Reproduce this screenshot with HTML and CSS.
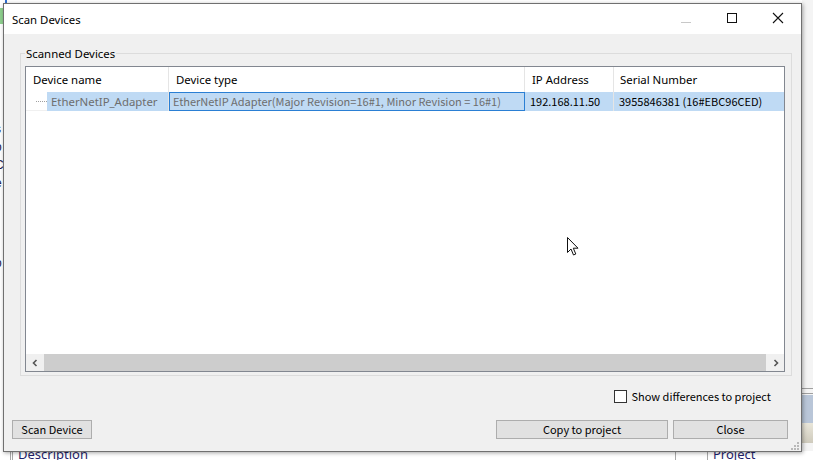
FILE: index.html
```html
<!DOCTYPE html>
<html>
<head>
<meta charset="utf-8">
<link rel="stylesheet" href="styles.css">
</head>
<body>
<div class="desktop">
  <div class="bg-left">
    <span class="bg-l1">s</span><span class="bg-l2">o</span><span class="bg-l3">C</span><span class="bg-l4">e</span><span class="bg-l5">o</span>
  </div>
  <div class="bg-green"></div>
  <div class="bg-blue-tick"></div>
  <div class="bg-right">
    <div class="bg-right-lines"></div>
    <div class="bg-right-blue"></div>
    <div class="bg-right-beige"></div>
  </div>
  <div class="bg-bottom">
    <div class="bg-vline bg-v1"></div>
    <div class="bg-vline bg-v2"></div>
    <span class="bg-desc">Description</span>
    <div class="bg-vline bg-v3"></div>
    <div class="bg-vline bg-v4"></div>
    <span class="bg-proj">Project</span>
  </div>

  <div class="dialog">
    <div class="titlebar">
      <span class="title">Scan Devices</span>
      <div class="controls">
        <svg class="ctl" width="46" height="30" viewBox="0 0 46 30"><line x1="18" y1="18.5" x2="28" y2="18.5" stroke="#c8c8c8" stroke-width="1"/></svg>
        <svg class="ctl" width="46" height="30" viewBox="0 0 46 30"><rect x="18.5" y="9.5" width="9" height="9" fill="none" stroke="#111" stroke-width="1"/></svg>
        <svg class="ctl" width="46" height="30" viewBox="0 0 46 30"><path d="M18 9 L28 19 M28 9 L18 19" stroke="#111" stroke-width="1.1"/></svg>
      </div>
    </div>
    <div class="body">
      <fieldset class="group">
        <legend class="legend">Scanned Devices</legend>
        <div class="list">
          <div class="list-head">
            <div class="hcell c1">Device name</div>
            <div class="hcell c2">Device type</div>
            <div class="hcell c3">IP Address</div>
            <div class="hcell c4">Serial Number</div>
          </div>
          <div class="list-row">
            <div class="cell c1 namecell"><span class="tree-dots"></span><span class="name-sel">EtherNetIP_Adapter</span></div>
            <div class="cell c2 typecell">EtherNetIP Adapter(Major Revision=16#1, Minor Revision = 16#1)</div>
            <div class="cell c3 sel gothic">192.168.11.50</div>
            <div class="cell c4 sel gothic">3955846381 (16#EBC96CED)</div>
          </div>
          <div class="list-empty"></div>
          <div class="hscroll">
            <div class="sb-btn"><svg width="8" height="8" viewBox="0 0 8 8"><path d="M5.5 1 L2.5 4 L5.5 7" fill="none" stroke="#555" stroke-width="1.6"/></svg></div>
            <div class="sb-thumb"></div>
            <div class="sb-btn"><svg width="8" height="8" viewBox="0 0 8 8"><path d="M2.5 1 L5.5 4 L2.5 7" fill="none" stroke="#555" stroke-width="1.6"/></svg></div>
          </div>
        </div>
      </fieldset>
      <div class="check-row">
        <span class="checkbox"></span>
        <span class="check-label">Show differences to project</span>
      </div>
      <div class="button-row">
        <button class="btn btn-scan">Scan Device</button>
        <div class="spacer"></div>
        <button class="btn btn-copy">Copy to project</button>
        <button class="btn btn-close">Close</button>
      </div>
      <svg class="grip" width="8" height="8" viewBox="0 0 8 8">
        <rect x="6" y="0" width="2" height="2" fill="#b8b8b8"/>
        <rect x="3" y="3" width="2" height="2" fill="#b8b8b8"/>
        <rect x="6" y="3" width="2" height="2" fill="#b8b8b8"/>
        <rect x="0" y="6" width="2" height="2" fill="#b8b8b8"/>
        <rect x="3" y="6" width="2" height="2" fill="#b8b8b8"/>
        <rect x="6" y="6" width="2" height="2" fill="#b8b8b8"/>
      </svg>
    </div>
  </div>

  <svg class="cursor" width="14" height="20" viewBox="0 0 14 20">
    <path d="M0.5 0.5 L0.5 15.5 L4 12 L6.5 18 L8.8 17 L6.3 11.2 L11 11.2 Z" fill="#fff" stroke="#111" stroke-width="1" stroke-linejoin="miter"/>
  </svg>
</div>
</body>
</html>
```

FILE: styles.css
```css
* { box-sizing: border-box; }
html, body { margin: 0; padding: 0; }
body {
  width: 813px;
  height: 460px;
  overflow: hidden;
  background: #ffffff;
  font-family: "Noto Sans", "Liberation Sans", sans-serif;
}
.desktop {
  position: relative;
  width: 813px;
  height: 460px;
  overflow: hidden;
  background: #ffffff;
}

/* background application fragments */
.bg-left {
  position: absolute;
  left: 0; top: 0;
  width: 4px; height: 460px;
  font-family: "Liberation Sans", sans-serif;
  font-size: 12px;
  color: #1a1a4a;
}
.bg-left span { position: absolute; left: -5px; }
.bg-l1 { top: 122px; }
.bg-l2 { top: 140px; }
.bg-l3 { top: 158px; }
.bg-l4 { top: 176px; }
.bg-l5 { top: 256px; }
.bg-green {
  position: absolute; left: 0; top: 8px; width: 3px; height: 16px;
  background: #8ed08e;
}
.bg-blue-tick {
  position: absolute; left: 5px; top: 0; width: 2px; height: 3px;
  background: #2f6fd0;
}
.bg-right {
  position: absolute; left: 802px; top: 0; width: 11px; height: 460px;
  background: #f4f4f4;
}
.bg-right-lines {
  position: absolute; left: 0; top: 388px; width: 11px; height: 6px;
  border-top: 1px solid #a0a0a0; border-bottom: 1px solid #a0a0a0;
}
.bg-right-blue {
  position: absolute; left: 0; top: 395px; width: 11px; height: 28px;
  background: #b9c6d8;
}
.bg-right-beige {
  position: absolute; left: 0; top: 423px; width: 11px; height: 20px;
  background: linear-gradient(#e9e6da, #cfcbbd);
}
.bg-bottom {
  position: absolute; left: 0; top: 451px; width: 813px; height: 9px;
  background: #ffffff;
}
.bg-vline { position: absolute; top: 0; width: 1px; height: 9px; background: #a8a8a8; }
.bg-v1 { left: 10px; }
.bg-v2 { left: 12px; }
.bg-v3 { left: 675px; }
.bg-v4 { left: 707px; }
.bg-desc, .bg-proj {
  position: absolute; top: -5px;
  font-family: "Noto Sans", sans-serif;
  font-size: 13px;
  line-height: 16px;
  color: #1f1f6b;
}
.bg-desc { left: 18px; }
.bg-proj { left: 713px; }

/* dialog window */
.dialog {
  position: absolute;
  left: 3px; top: 3px;
  width: 799px; height: 449px;
  border: 1px solid #707070;
  background: #f0f0f0;
  display: flex;
  flex-direction: column;
  box-shadow: 1px 1px 4px rgba(0,0,0,0.35);
}
.titlebar {
  height: 30px;
  background: #ffffff;
  display: flex;
  align-items: center;
  justify-content: space-between;
}
.title {
  padding-left: 8px;
  font-family: "Noto Sans", sans-serif;
  font-size: 11.4px;
  color: #000;
}
.controls { display: flex; align-self: stretch; }
.ctl { display: block; }

.body {
  flex: 1;
  position: relative;
  display: flex;
  flex-direction: column;
  padding: 11px 9px 0 16px;
}
.group {
  margin: 0;
  border: 1px solid #dcdcdc;
  padding: 0 6px 3px 4px;
  min-width: 0;
}
.legend {
  padding: 0 1px;
  font-family: "Noto Sans", sans-serif;
  font-size: 11.4px;
  line-height: 17px;
  color: #000;
}
.list {
  margin-top: 4px;
  height: 306px;
  border: 1px solid #828790;
  background: #ffffff;
  display: flex;
  flex-direction: column;
}
.list-head {
  display: flex;
  height: 25px;
  flex: none;
}
.hcell {
  font-family: "Noto Sans", sans-serif;
  font-size: 11.4px;
  color: #000;
  line-height: 25px;
  padding-left: 7px;
  border-right: 1px solid #e5e5e5;
  white-space: nowrap;
}
.c1 { width: 143px; flex: none; }
.c2 { width: 356px; flex: none; }
.c3 { width: 89px; flex: none; }
.c4 { flex: 1; border-right: none; }
.hcell.c4 { padding-left: 6px; }

.list-row {
  display: flex;
  height: 19px;
  flex: none;
  border-bottom: 1px solid #f0f0f0;
}
.cell {
  height: 19px;
  line-height: 19px;
  white-space: nowrap;
  overflow: hidden;
  font-size: 11px;
}
.namecell {
  display: flex;
  align-items: center;
  border-right: 1px solid #e5e5e5;
}
.tree-dots {
  width: 11px;
  margin-left: 10px;
  height: 1px;
  border-top: 1px dotted #a0a0a0;
}
.name-sel {
  flex: 1;
  align-self: stretch;
  background: #bfdaf4;
  color: #6d6d6d;
  font-family: "Noto Sans", sans-serif;
  font-size: 11.4px;
  padding-left: 4px;
}
.typecell {
  background: #bfdaf4;
  border: 1px solid #2a7fd4;
  color: #6d6d6d;
  font-family: "Noto Sans CJK JP", sans-serif;
  line-height: 17px;
  padding-left: 3px;
}
.sel {
  background: #bfdaf4;
  color: #000;
  border-right: 1px solid #e5e5e5;
}
.c3.sel { padding-left: 5px; }
.c4.sel { padding-left: 5px; border-right: none; }
.gothic { font-family: "Noto Sans CJK JP", sans-serif; }

.list-empty { flex: 1; }
.hscroll {
  height: 17px;
  flex: none;
  display: flex;
  background: #f0f0f0;
}
.sb-btn {
  width: 17px;
  display: flex;
  align-items: center;
  justify-content: center;
}
.sb-thumb {
  flex: 1;
  margin: 0 1px;
  background: #cdcdcd;
}

.check-row {
  display: flex;
  align-items: center;
  justify-content: flex-end;
  margin-top: 13px;
  padding-right: 21px;
  height: 14px;
}
.checkbox {
  width: 13px; height: 13px;
  border: 1px solid #333;
  background: #fff;
  margin-right: 4px;
}
.check-label {
  font-family: "Noto Sans CJK JP", sans-serif;
  font-size: 11px;
  color: #000;
  line-height: 14px;
}
.button-row {
  display: flex;
  margin-top: 17px;
  margin-left: -8px;
  padding-right: 4px;
  gap: 5px;
}
.spacer { flex: 1; }
.btn {
  height: 19px;
  padding: 0;
  background: #e1e1e1;
  border: 1px solid #adadad;
  font-family: "Noto Sans CJK JP", sans-serif;
  font-size: 11px;
  line-height: 17px;
  color: #000;
}
.btn-scan { width: 80px; }
.btn-copy { width: 172px; }
.btn-close { width: 115px; }
.grip {
  position: absolute;
  right: 2px;
  bottom: 1px;
}
.cursor {
  position: absolute;
  left: 567px;
  top: 237px;
}
```
